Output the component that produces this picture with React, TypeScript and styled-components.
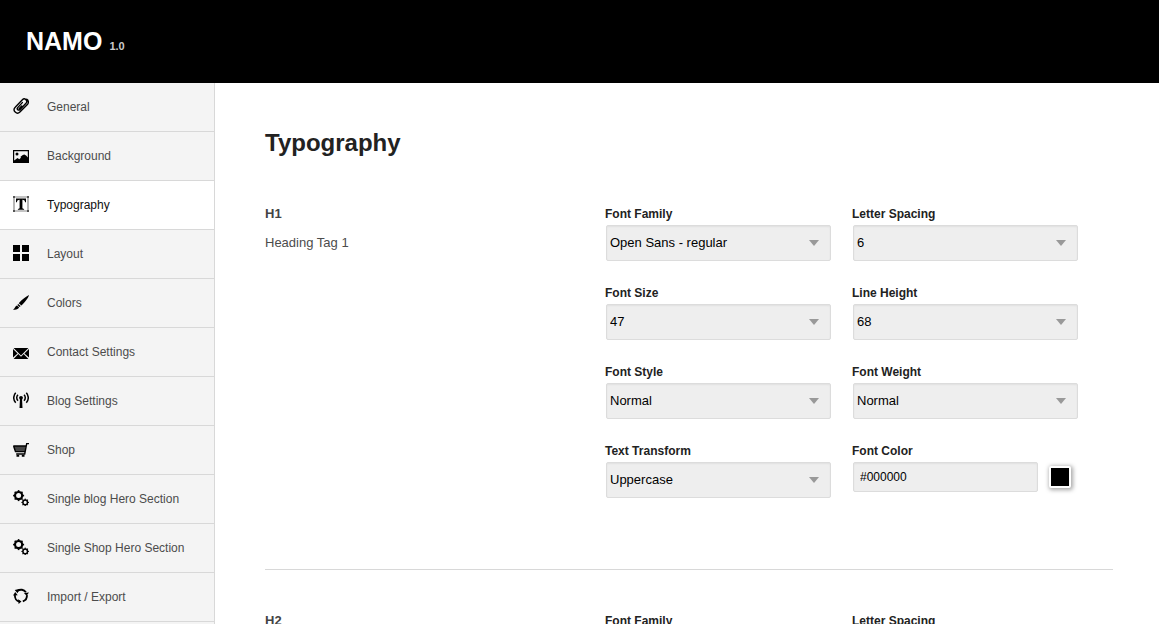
import React, { useId, useState } from 'react';
import styled, { createGlobalStyle } from 'styled-components';

const GlobalStyle = createGlobalStyle`
  *, *::before, *::after { box-sizing: border-box; }
  body {
    margin: 0;
    background: #fff;
    color: #222;
    font-family: "Liberation Sans", Arial, Helvetica, sans-serif;
    font-size: 13px;
    line-height: 16px;
  }
`;

const Shell = styled.div`
  display: flex;
  flex-direction: column;
  height: 100vh;
`;

const Header = styled.header`
  display: flex;
  flex: none;
  align-items: baseline;
  gap: 7px;
  padding: 27px 26px 28px;
  background: #000;
`;

const Brand = styled.h1`
  margin: 0;
  color: #fff;
  font-size: 25px;
  line-height: 28px;
`;

const Version = styled.span`
  color: #ccc;
  font-size: 11px;
  font-weight: bold;
`;

const Body = styled.div`
  display: flex;
  flex: 1;
  min-height: 0;
`;

const Sidebar = styled.nav`
  flex: none;
  width: 215px;
  overflow: hidden;
  background: #f4f4f4;
  border-right: 1px solid #d8d8d8;
`;

const NavList = styled.ul`
  margin: 0;
  padding: 0;
  list-style: none;
`;

const NavLink = styled.a<{ $active: boolean }>`
  display: flex;
  align-items: flex-start;
  gap: 18px;
  padding: 15px 13px;
  border-bottom: 1px solid #d8d8d8;
  background: ${(p) => (p.$active ? '#fff' : '#f4f4f4')};
  color: ${(p) => (p.$active ? '#111' : '#4c4c4c')};
  font-size: 12px;
  line-height: 18px;
  text-decoration: none;
  white-space: nowrap;
`;

const Icon = styled.svg`
  flex: none;
  width: 16px;
  height: 16px;
  color: #000;
  fill: currentColor;
`;

const Main = styled.main`
  flex: 1;
  min-width: 0;
  padding: 46px 46px 0 50px;
  overflow-y: auto;
  scrollbar-width: none;
`;

const Title = styled.h2`
  margin: 0 0 49px;
  font-size: 24px;
  line-height: 28px;
`;

const Section = styled.section`
  display: grid;
  grid-template-columns: 340px 1fr;
  margin-bottom: 43px;
  padding-bottom: 71px;
  border-bottom: 1px solid #d8d8d8;
`;

const SectionName = styled.h3`
  margin: 0 0 13px;
  color: #444;
  font-size: 13px;
`;

const Description = styled.p`
  margin: 0;
  color: #4c4c4c;
`;

const Fields = styled.div`
  display: grid;
  grid-template-columns: 1fr 1fr;
  gap: 24px 21px;
  padding-right: 35px;
`;

const Field = styled.div`
  display: flex;
  flex-direction: column;
  gap: 3px;
  min-width: 0;
`;

const Label = styled.label`
  font-size: 12px;
  font-weight: bold;
`;

const Control = styled.div`
  position: relative;
  display: flex;
  gap: 11px;
  padding-left: 1px;
`;

const Select = styled.select`
  width: 100%;
  height: 36px;
  padding: 0 30px 0 3px;
  appearance: none;
  background: #eee;
  border: 1px solid #dcdcdc;
  border-radius: 2px;
  box-shadow: inset 0 1px 2px rgba(0, 0, 0, 0.06);
  color: #000;
  font: inherit;
`;

const Arrow = styled.svg`
  position: absolute;
  top: 15px;
  right: 12px;
  width: 10px;
  height: 6px;
  fill: #999;
  pointer-events: none;
`;

const TextInput = styled.input`
  flex: 1;
  min-width: 0;
  height: 30px;
  padding: 0 6px;
  background: #eee;
  border: 1px solid #dcdcdc;
  border-radius: 2px;
  box-shadow: inset 0 1px 2px rgba(0, 0, 0, 0.06);
  color: #000;
  font: inherit;
  font-size: 12px;
`;

const Swatch = styled.button<{ $color: string }>`
  flex: none;
  width: 22px;
  height: 22px;
  margin: 4px 7px 0 0;
  padding: 0;
  background: ${(p) => p.$color};
  border: 2px solid #fff;
  border-radius: 2px;
  box-shadow: 1px 1px 4px 1px rgba(0, 0, 0, 0.35);
`;

type GearProps = { cx: number; cy: number; r: number; width: number; tooth: number };

/* A ring with eight short teeth round its centre. */
function Gear({ cx, cy, r, width, tooth }: GearProps) {
  return (
    <g>
      <circle cx={cx} cy={cy} r={r} fill="none" stroke="currentColor" strokeWidth={width} />
      {[0, 45, 90, 135, 180, 225, 270, 315].map((angle) => (
        <rect
          key={angle}
          x={cx - tooth / 2}
          y={cy - r - width / 2 - 0.8}
          width={tooth}
          height={1.6}
          transform={`rotate(${angle} ${cx} ${cy})`}
        />
      ))}
    </g>
  );
}

const icons: Record<string, React.ReactNode> = {
  clip: (
    <path
      d="M9.3 4.6L4.7 9.6a1.5 1.5 0 0 0 2.2 2.1L13 5.200a2.500 2.500 0 0 0-3.600-3.500L2.200 9.300a3.300 3.300 0 0 0 4.700 4.700L14.600 6.200a3.200 3.200 0 0 0-1-5M8.700 8.100L6.100 10.800"
      fill="none"
      stroke="currentColor"
      strokeWidth="1.400"
      strokeLinecap="round"
    />
  ),
  picture: (
    <>
      <path
        fillRule="evenodd"
        d="M0 3h16v13H0zM1.200 4.200v9.400l3.300-2.600 1.800 1.200 1.600-1.500-.4-1L9.800 8l1.600-.6 2 1.300 1.400 1.800V4.200z"
      />
      <circle cx="4" cy="7" r="1.500" />
    </>
  ),
  type: (
    <>
      <path d="M1 1h14v14H1z" fill="none" stroke="#888" strokeWidth="1.200" />
      <path d="M0 0h2v2H0zM14 0h2v2h-2zM0 14h2v2H0zM14 14h2v2h-2z" fill="#555" />
      <path d="M3 2.500h10v3.700h-.9C11.800 4.400 11 3.900 9.400 3.800v8c0 .8.400 1.100 1.700 1.200v.8H4.900V13c1.300-.1 1.700-.4 1.700-1.200v-8C5 3.900 4.200 4.400 3.900 6.200H3z" />
    </>
  ),
  grid: <path d="M0 0h7v7H0zM9 0h7v7H9zM0 9h7v7H0zM9 9h7v7H9z" />,
  brush: (
    <path d="M16 1C15.800 3 12.500 7.800 8.500 11.500L5.700 9.200C9.500 5 13.600 2.300 16 1zM5.200 9.900l2.500 2-1.100 1.100-2.300-1.900zM3.900 11.500l2.200 1.800C5.500 15.500 2.500 16 0 15.500c1.900-.7 2-3.200 3.900-4z" />
  ),
  mail: (
    <path d="M.6 5h14.800L8 12.400zM0 5.900l4.600 4.500L0 14.500zM16 5.900v8.600l-4.600-4.100zM5.300 11.100L8 13.800l2.700-2.700L15.400 16H.6z" />
  ),
  antenna: (
    <>
      <circle cx="8" cy="5.800" r="1.900" />
      <path d="M7 6.500h2L9.500 16h-3z" />
      <path
        d="M5 2.800a4.200 4.200 0 0 0 0 6M11 2.800a4.200 4.200 0 0 1 0 6M2.700.8a7.300 7.300 0 0 0 0 10M13.300.8a7.300 7.300 0 0 1 0 10"
        fill="none"
        stroke="currentColor"
        strokeWidth="1.500"
      />
    </>
  ),
  cart: (
    <>
      <path d="M.6 5h12.400l-1.200 5.500H2.400z" fill="#444" />
      <path
        d="M16 2.600h-2.300L11.700 13H3.200M.3 5h12.700M.6 5l1.900 5.600h9.400"
        fill="none"
        stroke="currentColor"
        strokeWidth="1.400"
      />
      <path d="M3.500 13.700h2.700v2H3.500zM8.800 13.700h2.700v2H8.800z" />
    </>
  ),
  gears: (
    <>
      <Gear cx={5.6} cy={5.6} r={3.600} width={2.200} tooth={1.600} />
      <Gear cx={12.2} cy={12.4} r={2.300} width={1.500} tooth={1} />
    </>
  ),
  refresh: (
    <>
      <path
        d="M4.500 2.900A6 6 0 0 1 12.900 4.200M13.900 7.200A6 6 0 0 1 9.800 13.400M6.400 13.700A6 6 0 0 1 2 7"
        fill="none"
        stroke="currentColor"
        strokeWidth="1.900"
      />
      <path d="M1.700 1.900L6.200 1 4.600 5.200zM16 4.500l-2.400 3.300L10.900 5zM5.200 11.200l3.300 2.300L5.600 16zM0 7.400L2.200 4l2.500 3.300z" />
    </>
  ),
};

const navItems = [
  { label: 'General', icon: 'clip' },
  { label: 'Background', icon: 'picture' },
  { label: 'Typography', icon: 'type' },
  { label: 'Layout', icon: 'grid' },
  { label: 'Colors', icon: 'brush' },
  { label: 'Contact Settings', icon: 'mail' },
  { label: 'Blog Settings', icon: 'antenna' },
  { label: 'Shop', icon: 'cart' },
  { label: 'Single blog Hero Section', icon: 'gears' },
  { label: 'Single Shop Hero Section', icon: 'gears' },
  { label: 'Import / Export', icon: 'refresh' },
];

function SelectField({ label, value }: { label: string; value: string }) {
  const id = useId();
  return (
    <Field>
      <Label htmlFor={id}>{label}</Label>
      <Control>
        <Select id={id} defaultValue={value}>
          <option>{value}</option>
        </Select>
        <Arrow viewBox="0 0 10 6" aria-hidden="true">
          <path d="M0 0h10L5 6z" />
        </Arrow>
      </Control>
    </Field>
  );
}

function ColorField({ label, value }: { label: string; value: string }) {
  const id = useId();
  const [color, setColor] = useState(value);
  return (
    <Field>
      <Label htmlFor={id}>{label}</Label>
      <Control>
        <TextInput id={id} value={color} onChange={(e) => setColor(e.target.value)} />
        <Swatch type="button" $color={color} aria-label="Pick a color" />
      </Control>
    </Field>
  );
}

export default function App() {
  return (
    <Shell>
      <GlobalStyle />
      <Header>
        <Brand>NAMO</Brand>
        <Version>1.0</Version>
      </Header>
      <Body>
        <Sidebar>
          <NavList>
            {navItems.map(({ label, icon }) => (
              <li key={label}>
                <NavLink href="#" $active={label === 'Typography'}>
                  <Icon viewBox="0 0 16 16" aria-hidden="true">
                    {icons[icon]}
                  </Icon>
                  {label}
                </NavLink>
              </li>
            ))}
          </NavList>
        </Sidebar>
        <Main>
          <Title>Typography</Title>
          <Section>
            <div>
              <SectionName>H1</SectionName>
              <Description>Heading Tag 1</Description>
            </div>
            <Fields>
              <SelectField label="Font Family" value="Open Sans - regular" />
              <SelectField label="Letter Spacing" value="6" />
              <SelectField label="Font Size" value="47" />
              <SelectField label="Line Height" value="68" />
              <SelectField label="Font Style" value="Normal" />
              <SelectField label="Font Weight" value="Normal" />
              <SelectField label="Text Transform" value="Uppercase" />
              <ColorField label="Font Color" value="#000000" />
            </Fields>
          </Section>
          <Section>
            <SectionName>H2</SectionName>
            <Fields>
              <SelectField label="Font Family" value="Open Sans - regular" />
              <SelectField label="Letter Spacing" value="6" />
            </Fields>
          </Section>
        </Main>
      </Body>
    </Shell>
  );
}
